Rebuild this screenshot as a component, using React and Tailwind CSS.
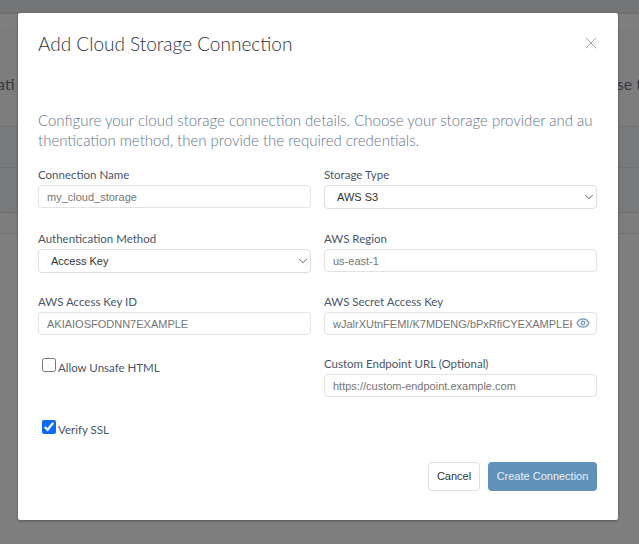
import React from 'react'
import { X, ChevronDown, Eye } from 'lucide-react'

const labelClass = "block font-['Lato',sans-serif] text-[11.5px] leading-[16px] text-[#4a5568] pt-[2px] mb-[2px]"

const Field = ({ label, value, right }) => (
    <div>
        <label className={labelClass}>{label}</label>
        <div className="relative">
            <input
                readOnly
                value={value}
                className={`block w-full h-[23px] rounded-[4px] border border-[#e2e2e2] bg-white pl-[8px] ${right ? 'pr-[24px]' : 'pr-2'} font-['Liberation_Sans',sans-serif] text-[11px] text-[#757575] outline-none`}
            />
            {right}
        </div>
    </div>
)

const SelectField = ({ label, value }) => (
    <div>
        <label className={labelClass}>{label}</label>
        <div className="relative">
            <select
                defaultValue={value}
                className="block w-full h-[24px] appearance-none rounded-[4px] border border-[#dedede] bg-white pl-[12px] font-['Liberation_Sans',sans-serif] text-[11px] text-[#333333] outline-none"
            >
                <option>{value}</option>
            </select>
            <ChevronDown className="absolute right-[1px] top-[5px] w-[14px] h-[14px] text-[#4a4a4a] pointer-events-none" strokeWidth={1.5} />
        </div>
    </div>
)

const Checkbox = ({ label, checked }) => (
    <label className="flex items-start pl-[4px]">
        <input
            type="checkbox"
            readOnly
            checked={checked}
            className="w-[14px] h-[14px] m-0 accent-[#0b6bf5]"
        />
        <span className="ml-[2px] mt-[2px] font-['Lato',sans-serif] text-[11.5px] leading-[16px] text-[#4a5568]">{label}</span>
    </label>
)

const App = () => {
    return (
        <div className="relative w-[639px] h-[544px] overflow-hidden bg-[#7f7f7f]">
            {/* page behind the overlay */}
            <div className="h-[14px] bg-[#737475] border-b border-[#6e6f70]"></div>
            <div className="h-[13px]"></div>
            <div className="h-[100px] bg-[#7d7d7d] border-b border-[#717171] flex items-center justify-between -mr-[3px] -ml-[3px] font-['Lato',sans-serif] text-[16px] text-[#333a44]">
                <span className="mt-[14px]">ati</span>
                <span className="mt-[14px]">se t</span>
            </div>
            <div className="h-[41px] bg-[#78797a] border-b border-[#717171]"></div>
            <div className="h-[45px] bg-[#78797a] border-b border-[#6c6c6c]"></div>
            <div className="h-[21px] bg-[#7d7d7d] border-b border-[#717171]"></div>

            {/* modal */}
            <div className="absolute left-[18px] top-[13px] w-[600px] h-[507px] bg-white rounded-[2px] shadow-[0_1px_3px_rgba(0,0,0,0.35)] px-[20px]">
                <div className="flex items-start justify-between pt-[19px]">
                    <h2 className="font-['Lato',sans-serif] font-light text-[19px] leading-[24px] text-[#2d3136]">Add Cloud Storage Connection</h2>
                    <X className="w-[20px] h-[20px] mt-[1px] mr-[-3px] text-[#8a8a8a]" strokeWidth={1} />
                </div>
                <p className="mt-[54px] pr-[3px] font-['Lato',sans-serif] font-light text-[15px] leading-[20px] text-[#64748b] break-all">
                    Configure your cloud storage connection details. Choose your storage provider and authentication method, then provide the required credentials.
                </p>
                <div className="grid grid-cols-[273px_273px] gap-x-[13px] mt-[15px]">
                    <div className="h-[64px]"><Field label="Connection Name" value="my_cloud_storage" /></div>
                    <div className="h-[64px]"><SelectField label="Storage Type" value="AWS S3" /></div>
                    <div className="h-[63px]"><SelectField label="Authentication Method" value="Access Key" /></div>
                    <div className="h-[63px]"><Field label="AWS Region" value="us-east-1" /></div>
                    <div className="h-[62px]"><Field label="AWS Access Key ID" value="AKIAIOSFODNN7EXAMPLE" /></div>
                    <div className="h-[62px]">
                        <Field
                            label="AWS Secret Access Key"
                            value="wJalrXUtnFEMI/K7MDENG/bPxRfiCYEXAMPLEKEY"
                            right={<Eye className="absolute right-[7px] top-[4px] w-[14px] h-[14px] text-[#7f9fb8]" strokeWidth={2.5} />}
                        />
                    </div>
                    <div className="h-[62px] pt-[4px]"><Checkbox label="Allow Unsafe HTML" /></div>
                    <div className="h-[62px]"><Field label="Custom Endpoint URL (Optional)" value="https://custom-endpoint.example.com" /></div>
                    <div className="h-[33px] pt-[4px]"><Checkbox label="Verify SSL" checked /></div>
                </div>
                <div className="flex justify-end gap-[8px] mt-[13px] pr-[1px]">
                    <button className="h-[29px] w-[52px] rounded-[4px] border border-[#dfdfdf] bg-white font-['Liberation_Sans',sans-serif] text-[11px] text-[#333333]">Cancel</button>
                    <button className="h-[29px] w-[109px] rounded-[4px] bg-[#6092b9] font-['Liberation_Sans',sans-serif] text-[11px] text-[#e8f0f6]">Create Connection</button>
                </div>
            </div>
        </div>
    )
}

export default App
